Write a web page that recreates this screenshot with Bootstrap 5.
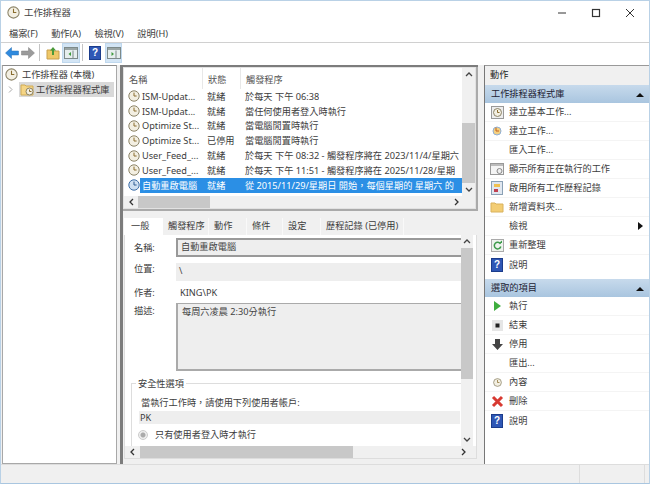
<!DOCTYPE html>
<html lang="zh-Hant">
<head>
<meta charset="utf-8">
<title>工作排程器</title>
<link href="https://cdn.jsdelivr.net/npm/bootstrap@5.3.0/dist/css/bootstrap.min.css" rel="stylesheet">
<style>
html,body{margin:0;height:484px;overflow:hidden;background:#fff}
body{font-family:"Noto Sans","Noto Sans CJK TC",sans-serif;font-size:9.2px;line-height:1.2;color:#3c3c3c}
.win{width:650px;height:484px;border:1px solid #b9d1e6;border-bottom-color:#a9c6e0;background:#fff}
.tbar{height:21px;padding:2px 0 0 6px;gap:4px;font-size:9.4px;color:#444;flex:none}
.tctl{margin-left:auto;gap:24px;padding-right:14px}
.menu{height:20px;padding:3px 0 0 8px;gap:13.500px;flex:none}
.tools{height:23px;border-top:1px solid #d0d0d0;padding-left:3px;flex:none}
.tbtn{height:20px;justify-content:center;align-items:center;flex:none}
.tb16{width:16px}.tb19{width:19px}.tb14{width:14px;margin-right:3px}
.tb18{width:18px}.tb17{width:17px}
.tbtn.on{background:#d3e5f5;border:1px solid #bfd8ee}
.tsep{width:1px;height:17px;background:#c4c4c4;margin:1px 3px 0;flex:none}
.tsep2{margin:1px 5px 0 2px}
.qic{display:inline-block;width:12px;height:14px;background:#2f57b5;border:1px solid #1b3c8c;color:#fff;font:700 10px/12px "Liberation Sans",sans-serif;text-align:center;flex:none}
.mainrow{height:399px;background:#f0f0f0;flex:none}
.tree{width:115px;margin-left:1px;background:#fff;border:1px solid #a8a8a8;border-top-color:#8c8c8c;flex:none;padding-top:1px}
.tn{height:15px;align-items:center;gap:4px;padding-left:2px;white-space:nowrap}
.tn.sel{background:#d9d9d9;margin-left:6px;padding-left:1px;margin-right:2px;gap:2px}
.chevw{margin-left:5px;flex:none}
.centerp{width:358px;margin-left:3px;border-left:3px solid #7c7c7c;flex:none;background:#f0f0f0}
.lframe{height:146px;border:solid #7c7c7c;border-width:2px 0 0 0;flex:none;background:#aaa;padding:0 2px 2px 0}
.lbox{height:100%;border:1px solid #e2e2e2;background:#fff}
.lhead{height:21px;align-items:center;color:#555;flex:none}
.lhead>span{border-right:1px solid #e8e8e8;height:100%;display:flex;align-items:center;padding:2px 0 0 5px}
.c1{width:79px;flex:none;white-space:nowrap;overflow:hidden}
.c2{width:38px;flex:none}
.c3{white-space:nowrap;overflow:hidden}
.lrow{height:14.800px;align-items:center}
.lrow .c1{display:flex;align-items:center;gap:2px;padding-left:4px}
.lrow .c2{padding-left:4px}
.lrow .c3{padding-left:4px}
.lrow b{font-weight:400}
.lrow.sel{background:linear-gradient(#2b8fe5,#2b8fe5) no-repeat 16px 0;color:#fff}
.lmain{min-width:0;min-height:0}
.lbody{min-height:0;flex:1}
.flexfill{min-height:0;flex:1}
.vsb{background:#f0f0f0;flex:none;align-items:center;width:13px}
.vsb15{width:12px;margin-right:3px}
.thumb{background:#c8c8c8;width:100%}
.thv1{height:60px;margin-top:42px;margin-bottom:auto}
.thv2{height:131px;margin-bottom:auto}
.hsb{height:12px;background:#f0f0f0;flex:none;align-items:stretch}
.thh1{width:72px;flex:none}
.thh2{width:213px;flex:none}
.ar{height:13px;width:12px;flex:none;display:flex;align-items:center;justify-content:center}
.ar2{margin-left:auto;width:26px;height:12px}
.ar3{margin-left:auto;width:38px;height:12px}
.arh{height:12px;width:14px}
.arh2{height:12px;width:15px}
.detail{flex:1;min-height:0;padding:7px 1px 5px 1px}
.tabs{height:17px;flex:none}
.tabx{background:#f0f0f0;height:17px;line-height:16px;white-space:nowrap;padding-left:5px;border-right:1px solid #f9f9f9;flex:none}
.tabx.on{background:#fff;padding-left:7px;border-right:0}
.t1{width:39px}.t2{width:46px}.t3{width:38px}.t4{width:36px}.t5{width:38px}.t6{width:83px}
.dbox{flex:1;min-height:0;background:#fff;border:1px solid #ddd;border-top:0}
.dscroll{min-width:0;overflow:hidden;flex:1;padding-top:3px}
.fr{display:flex;align-items:center;padding-left:9px}
.fr3{height:22px;padding-top:2px}
.fl{width:42px;flex:none}
.fl4{padding-top:2px}
.field{flex:1;background:#eee;padding-left:3px;color:#444}
.f1{height:19px;border:solid #999;border-width:2px 0 2px 2px;line-height:14px}
.f2{height:18px;line-height:16px;margin-top:6px}
.f3{height:68px;border:solid #aaa;border-width:1px 0 2px 2px;padding-top:2px;padding-left:4px}
.gbox{margin:12px 0 0 6px;border:1px solid #ddd;border-width:1px 0 0 1px;padding:13px 0 0 9px;height:75px;position:relative}
.glabel{position:absolute;left:4px;top:-6px;background:#fff;padding:0 2px}
.pkf{background:#eee;height:13px;line-height:13px;margin:3px 1px 0 -2px;padding-left:1px}
.radrow{gap:7px;margin:5px 0 0 -3px}
.radio{width:10px;height:10px;border:1px solid #ccc;border-radius:50%;background:radial-gradient(circle,#aaa 0 2px,#eee 3px);flex:none}
.rp{width:165px;margin-left:6px;flex:none;background:#fff;border-left:1px solid #777;border-top:1px solid #999}
.rtitle{height:19px;background:#f0f0f0;line-height:18px;padding-left:5px;color:#222}
.rsec{height:18px;background:linear-gradient(#c7daec,#a9c5df);padding:0 5px 0 6px;justify-content:space-between;align-items:center;color:#223}
.rsec2{margin-top:5px}
.ri{height:19px;align-items:center;border-bottom:1px solid #f4f4f4;padding-left:3px}
.ri.nb{border-bottom:0}
.ric{width:21px;flex:none;display:flex;justify-content:center;padding-right:3px}
.rtri{margin-left:auto;margin-right:6px}
.status{flex:1;background:#f0f0f0;border-top:1px solid #ddd}
.sc{border-right:1px solid #ddd}
.sc1{width:579px}.sc2{width:65px}
.svgdefs{position:absolute;width:0;height:0}
</style>
</head>
<body>
<svg class="svgdefs">
<symbol id="clk" viewBox="0 0 12 12"><circle cx="6" cy="6" r="5.200" fill="#f3efe2" stroke="#8c8468"/><path d="M6 2.600V6h2.600" fill="none" stroke="#8a6d2e"/></symbol>
<symbol id="clkb" viewBox="0 0 12 12"><circle cx="6" cy="6" r="5.200" fill="#cfe0f2" stroke="#3d6ea8"/><path d="M6 2.600V6h2.600" fill="none" stroke="#2c5a90"/></symbol>
<symbol id="fold" viewBox="0 0 14 12"><path d="M1 2h4l1 1h7v8H1z" fill="#f3cd74" stroke="#d9b25c"/></symbol>
<symbol id="up" viewBox="0 0 8 5"><path d="M1 4l3-3 3 3" fill="none" stroke="#444" stroke-width="1.300"/></symbol>
<symbol id="dn" viewBox="0 0 8 5"><path d="M1 1l3 3 3-3" fill="none" stroke="#444" stroke-width="1.300"/></symbol>
<symbol id="lf" viewBox="0 0 5 8"><path d="M4 1L1 4l3 3" fill="none" stroke="#333" stroke-width="1.300"/></symbol>
<symbol id="rt" viewBox="0 0 5 8"><path d="M1 1l3 3-3 3" fill="none" stroke="#333" stroke-width="1.300"/></symbol>
<symbol id="pane" viewBox="0 0 14 12"><rect x=".5" y=".5" width="13" height="11" fill="#e6eeee" stroke="#7d8a8a"/><path d="M1 1h12v2H1z" fill="#9aa5a5"/></symbol>
</svg>
<div class="win d-flex flex-column">
  <div class="tbar d-flex align-items-center">
    <svg width="13" height="13"><use href="#clk"/></svg><span>工作排程器</span>
    <div class="tctl d-flex align-items-center">
      <svg width="10" height="10" viewBox="0 0 10 10"><path d="M1 5h8" stroke="#333"/></svg>
      <svg width="10" height="10" viewBox="0 0 10 10"><rect x="1.500" y="1.500" width="7" height="7" fill="none" stroke="#333" stroke-width="1.200"/></svg>
      <svg width="10" height="10" viewBox="0 0 10 10"><path d="M1 1l8 8M9 1l-8 8" stroke="#333"/></svg>
    </div>
  </div>
  <div class="menu d-flex align-items-center">
    <span>檔案(F)</span><span>動作(A)</span><span>檢視(V)</span><span>說明(H)</span>
  </div>
  <div class="tools d-flex align-items-start">
    <div class="tbtn tb16 d-flex"><svg width="14" height="12" viewBox="0 0 14 12"><path d="M.5 6l6-5.500V4H13.500v4H6.500v3.500z" fill="#2f8ade" stroke="#2a70b5" stroke-width=".5"/></svg></div>
    <div class="tbtn tb16 d-flex"><svg width="14" height="12" viewBox="0 0 14 12"><path d="M13.500 6l-6-5.500V4H.5v4h7v3.500z" fill="#9b9b9b" stroke="#808080" stroke-width=".5"/></svg></div>
    <div class="tsep"></div>
    <div class="tbtn tb19 d-flex"><svg width="14" height="14" viewBox="0 0 14 14"><path d="M1 4h4l1 1h7v8H1z" fill="#efc868" stroke="#c9a04c"/><path d="M7 1L4 4.500h2V9h2V4.500h2z" fill="#4a9a3a"/></svg></div>
    <div class="tbtn tb18 on d-flex"><svg width="14" height="12"><use href="#pane"/><path d="M9 3.500v8" stroke="#7d8a8a"/><path d="M7 5v4L4.500 7z" fill="#3d9a3d"/></svg></div>
    <div class="tsep tsep2"></div>
    <div class="tbtn tb14 d-flex"><span class="qic">?</span></div>
    <div class="tbtn tb17 on d-flex"><svg width="14" height="12"><use href="#pane"/><path d="M9 3.500v8" stroke="#7d8a8a"/><path d="M4.500 5v4L7 7z" fill="#3d9a3d"/></svg></div>
  </div>
  <div class="mainrow d-flex">
    <div class="tree">
      <div class="tn d-flex"><svg width="13" height="13"><use href="#clk"/></svg><span>工作排程器 (本機)</span></div>
      <div class="d-flex align-items-center">
        <svg class="chevw" width="5" height="9" viewBox="0 0 5 8"><path d="M1 1l3 3-3 3" fill="none" stroke="#aaa"/></svg>
        <div class="tn sel d-flex flex-grow-1"><svg width="14" height="13" viewBox="0 0 14 13"><path d="M1 2h4l1 1h7v9H1z" fill="#f5d585" stroke="#d0ab55"/><circle cx="9.500" cy="8.500" r="3.500" fill="#f3efe2" stroke="#8c8468"/><path d="M9.500 6.500v2h2" fill="none" stroke="#8a6d2e"/></svg><span>工作排程器程式庫</span></div>
      </div>
    </div>
    <div class="centerp d-flex flex-column">
      <div class="lframe">
        <div class="lbox d-flex flex-column">
          <div class="d-flex flexfill">
            <div class="lmain flex-grow-1 d-flex flex-column">
              <div class="lhead d-flex"><span class="c1">名稱</span><span class="c2">狀態</span><span class="c3 border-0">觸發程序</span></div>
              <div class="lbody">
                <div class="lrow d-flex"><span class="c1"><svg width="12" height="12"><use href="#clk"/></svg><b>ISM-Updat...</b></span><span class="c2">就緒</span><span class="c3">於每天 下午 06:38</span></div>
                <div class="lrow d-flex"><span class="c1"><svg width="12" height="12"><use href="#clk"/></svg><b>ISM-Updat...</b></span><span class="c2">就緒</span><span class="c3">當任何使用者登入時執行</span></div>
                <div class="lrow d-flex"><span class="c1"><svg width="12" height="12"><use href="#clk"/></svg><b>Optimize St...</b></span><span class="c2">就緒</span><span class="c3">當電腦閒置時執行</span></div>
                <div class="lrow d-flex"><span class="c1"><svg width="12" height="12"><use href="#clk"/></svg><b>Optimize St...</b></span><span class="c2">已停用</span><span class="c3">當電腦閒置時執行</span></div>
                <div class="lrow d-flex"><span class="c1"><svg width="12" height="12"><use href="#clk"/></svg><b>User_Feed_...</b></span><span class="c2">就緒</span><span class="c3">於每天 下午 08:32 - 觸發程序將在 2023/11/4/星期六</span></div>
                <div class="lrow d-flex"><span class="c1"><svg width="12" height="12"><use href="#clk"/></svg><b>User_Feed_...</b></span><span class="c2">就緒</span><span class="c3">於每天 下午 11:51 - 觸發程序將在 2025/11/28/星期</span></div>
                <div class="lrow sel d-flex"><span class="c1"><svg width="12" height="12"><use href="#clkb"/></svg><b>自動重啟電腦</b></span><span class="c2">就緒</span><span class="c3">從 2015/11/29/星期日 開始，每個星期的 星期六 的</span></div>
              </div>
            </div>
            <div class="vsb d-flex flex-column">
              <span class="ar"><svg width="8" height="5"><use href="#up"/></svg></span>
              <div class="thumb thv1"></div>
              <span class="ar"><svg width="8" height="5"><use href="#dn"/></svg></span>
            </div>
          </div>
          <div class="hsb d-flex">
            <span class="ar arh"><svg width="5" height="8"><use href="#lf"/></svg></span>
            <div class="thumb thh1"></div>
            <span class="ar ar3"><svg width="5" height="8"><use href="#rt"/></svg></span>
          </div>
        </div>
      </div>
      <div class="detail d-flex flex-column">
        <div class="tabs d-flex">
          <div class="tabx on t1">一般</div>
          <div class="tabx t2">觸發程序</div>
          <div class="tabx t3">動作</div>
          <div class="tabx t4">條件</div>
          <div class="tabx t5">設定</div>
          <div class="tabx t6">歷程記錄 (已停用)</div>
        </div>
        <div class="dbox d-flex flex-column">
          <div class="d-flex flexfill">
            <div class="dscroll">
              <div class="fr"><span class="fl">名稱:</span><div class="field f1">自動重啟電腦</div></div>
              <div class="fr"><span class="fl">位置:</span><div class="field f2">\</div></div>
              <div class="fr fr3"><span class="fl">作者:</span><span class="ps-1">KING\PK</span></div>
              <div class="fr align-items-start"><span class="fl fl4">描述:</span><div class="field f3">每周六凌晨 2:30分執行</div></div>
              <div class="gbox">
                <span class="glabel">安全性選項</span>
                <div>當執行工作時，請使用下列使用者帳戶:</div>
                <div class="pkf">PK</div>
                <div class="radrow d-flex align-items-center"><span class="radio"></span><span>只有使用者登入時才執行</span></div>
              </div>
            </div>
            <div class="vsb vsb15 d-flex flex-column">
              <span class="ar"><svg width="8" height="5"><use href="#up"/></svg></span>
              <div class="thumb thv2"></div>
              <span class="ar"><svg width="8" height="5"><use href="#dn"/></svg></span>
            </div>
          </div>
          <div class="hsb d-flex">
            <span class="ar arh2"><svg width="5" height="8"><use href="#lf"/></svg></span>
            <div class="thumb thh2"></div>
            <span class="ar ar2"><svg width="5" height="8"><use href="#rt"/></svg></span>
          </div>
        </div>
      </div>
    </div>
    <div class="rp">
      <div class="rtitle">動作</div>
      <div class="rsec d-flex"><span>工作排程器程式庫</span><svg width="8" height="5" viewBox="0 0 8 5"><path d="M0 5l4-4 4 4z" fill="#111"/></svg></div>
      <div class="ri d-flex"><span class="ric"><svg width="13" height="13" viewBox="0 0 13 13"><rect x=".5" y=".5" width="12" height="12" fill="#eee" stroke="#999"/><circle cx="6.500" cy="6.500" r="4" fill="#f3efe2" stroke="#8c8468"/><path d="M6.500 4v2.500h2" fill="none" stroke="#8a6d2e"/></svg></span>建立基本工作...</div>
      <div class="ri d-flex"><span class="ric"><svg width="10" height="10" viewBox="0 0 10 10"><circle cx="5" cy="5" r="4" fill="#f5d080" stroke="#8fb0d8"/><path d="M4 1.500V5h3" fill="none" stroke="#c0601c"/></svg></span>建立工作...</div>
      <div class="ri d-flex"><span class="ric"></span>匯入工作...</div>
      <div class="ri d-flex"><span class="ric"><svg width="14" height="12" viewBox="0 0 14 12"><rect x=".5" y=".5" width="13" height="11" fill="#f4f4f4" stroke="#999"/><path d="M1 1h12v2H1z" fill="#bbb"/><circle cx="9.500" cy="8" r="2.500" fill="#eee" stroke="#888"/></svg></span>顯示所有正在執行的工作</div>
      <div class="ri d-flex"><span class="ric"><svg width="12" height="14" viewBox="0 0 12 14"><rect x=".5" y=".5" width="11" height="13" fill="#e0e7f0" stroke="#8aa0b5"/><rect x="3" y="3" width="6" height="3" fill="#f0c050"/><rect x="3" y="8" width="4" height="3" fill="#c04050"/></svg></span>啟用所有工作歷程記錄</div>
      <div class="ri d-flex"><span class="ric"><svg width="14" height="12"><use href="#fold"/></svg></span>新增資料夾...</div>
      <div class="ri d-flex"><span class="ric"></span>檢視<svg class="rtri" width="5" height="8" viewBox="0 0 5 8"><path d="M0 0l5 4-5 4z" fill="#111"/></svg></div>
      <div class="ri d-flex"><span class="ric"><svg width="13" height="13" viewBox="0 0 13 13"><rect x=".5" y=".5" width="12" height="12" fill="#eef3ee" stroke="#aaa"/><path d="M9.500 5A3.300 3.300 0 1 0 9.800 7.500" fill="none" stroke="#3d9a4a" stroke-width="1.500"/><path d="M8 4h3V1.500z" fill="#3d9a4a"/></svg></span>重新整理</div>
      <div class="ri nb d-flex"><span class="ric"><span class="qic">?</span></span>說明</div>
      <div class="rsec rsec2 d-flex"><span>選取的項目</span><svg width="8" height="5" viewBox="0 0 8 5"><path d="M0 5l4-4 4 4z" fill="#111"/></svg></div>
      <div class="ri d-flex"><span class="ric"><svg width="7" height="10" viewBox="0 0 7 10"><path d="M0 0l7 5-7 5z" fill="#3fae3f"/></svg></span>執行</div>
      <div class="ri d-flex"><span class="ric"><svg width="11" height="11" viewBox="0 0 11 11"><rect width="11" height="11" fill="#e6e6e6"/><rect x="3.500" y="3.500" width="4" height="4" fill="#222"/></svg></span>結束</div>
      <div class="ri d-flex"><span class="ric"><svg width="11" height="11" viewBox="0 0 11 11"><path d="M3 0h5v5h3L5.500 11 0 5h3z" fill="#444"/></svg></span>停用</div>
      <div class="ri d-flex"><span class="ric"></span>匯出...</div>
      <div class="ri d-flex"><span class="ric"><svg width="9" height="9"><use href="#clk"/></svg></span>內容</div>
      <div class="ri d-flex"><span class="ric"><svg width="13" height="13" viewBox="0 0 13 13"><path d="M2 2l9 9M11 2l-9 9" stroke="#d83a32" stroke-width="3"/></svg></span>刪除</div>
      <div class="ri nb d-flex"><span class="ric"><span class="qic">?</span></span>說明</div>
    </div>
  </div>
  <div class="status d-flex">
    <div class="sc sc1"></div>
    <div class="sc sc2"></div>
  </div>
</div>
</body>
</html>
